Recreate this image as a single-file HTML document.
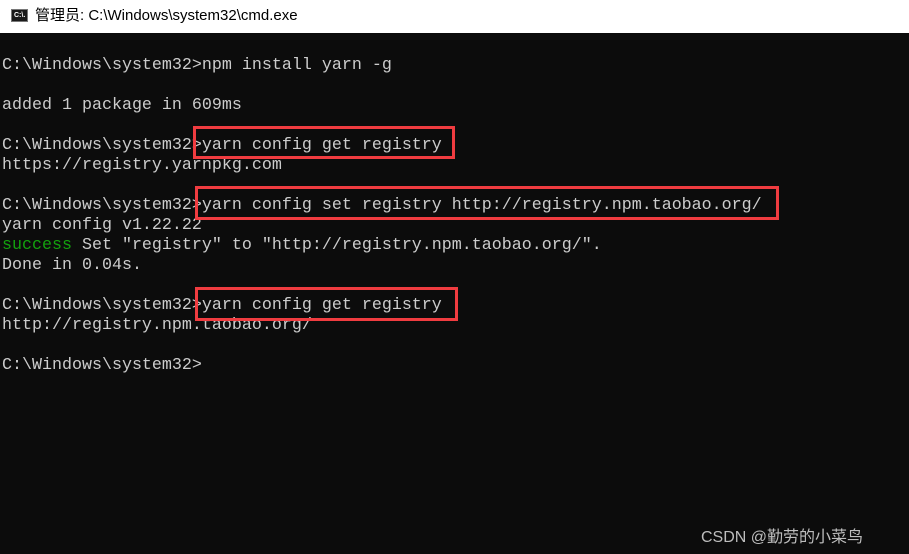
<!DOCTYPE html>
<html><head><meta charset="utf-8"><style>
html,body{margin:0;padding:0;width:909px;height:554px;overflow:hidden;background:#0c0c0c;}
#title{position:absolute;left:0;top:0;width:909px;height:33px;background:#fff;}
#icon{position:absolute;left:11px;top:9px;width:17px;height:13px;background:#1a1a1a;border:1px solid #777;box-sizing:border-box;}
#icon span{position:absolute;left:2px;top:2px;font:bold 7px "Liberation Sans",sans-serif;color:#fff;line-height:8px;}
#ttl{position:absolute;left:35px;top:7px;font:15px "Liberation Sans","Noto Sans CJK SC",sans-serif;color:#000;line-height:18px;}
#term{position:absolute;left:2px;top:36px;font:16.67px "Liberation Mono","Noto Sans CJK SC",monospace;color:#cccccc;line-height:20px;white-space:pre;}
.g{color:#13a10e;}
.box{position:absolute;border:3px solid #f03c40;box-sizing:border-box;}
#wm{position:absolute;left:701px;top:523px;font:16px "Liberation Sans","Noto Sans CJK SC",sans-serif;color:#bdbdbd;}
#lb{position:absolute;left:0;top:33px;width:1px;height:521px;background:#333;}
</style></head><body>
<div id="title"><div id="icon"><span>C:\.</span></div><div id="ttl">管理员: C:\Windows\system32\cmd.exe</div></div>
<div id="term">
C:\Windows\system32&gt;npm install yarn -g

added 1 package in 609ms

C:\Windows\system32&gt;yarn config get registry
https://registry.yarnpkg.com

C:\Windows\system32&gt;yarn config set registry http://registry.npm.taobao.org/
yarn config v1.22.22
<span class="g">success</span> Set "registry" to "http://registry.npm.taobao.org/".
Done in 0.04s.

C:\Windows\system32&gt;yarn config get registry
http://registry.npm.taobao.org/

C:\Windows\system32&gt;</div>
<div class="box" style="left:193px;top:126px;width:262px;height:33px"></div>
<div class="box" style="left:195px;top:186px;width:584px;height:34px"></div>
<div class="box" style="left:195px;top:287px;width:263px;height:34px"></div>
<div id="wm">CSDN @勤劳的小菜鸟</div>
</body></html>
